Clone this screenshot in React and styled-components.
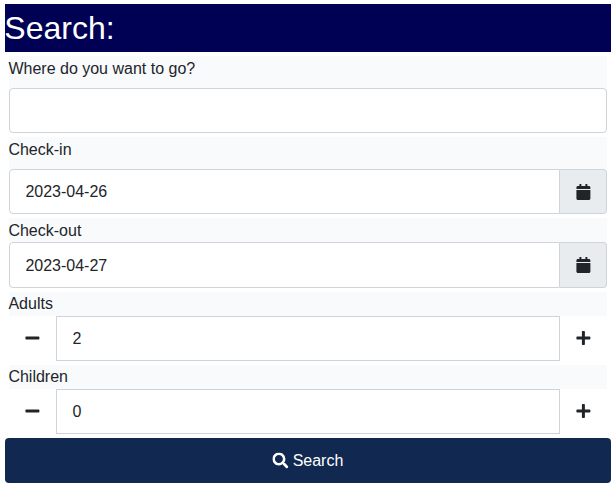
import React from 'react';
import styled, { createGlobalStyle } from 'styled-components';
import { FaCalendar, FaMinus, FaPlus, FaSearch } from 'react-icons/fa';

const GlobalStyle = createGlobalStyle`
  *, *::before, *::after { box-sizing: border-box; }
  body {
    margin: 0;
    background: #fff;
    color: #212529;
    font: 16px/24px "Liberation Sans", Arial, sans-serif;
  }
`;

const Form = styled.form`
  width: 606px;
  margin: 4px 0 0 5px;
`;

const Title = styled.h1`
  height: 48px;
  margin: 0 0 4px;
  background: #000055;
  color: #fff;
  font-size: 32px;
  font-weight: 400;
  line-height: 48px;
  text-indent: -0.7px;
`;

const Field = styled.div`
  display: flex;
  flex-direction: column;
  margin: 0 4px 4px;
  background: linear-gradient(#f9fafc, #f9fafc) top / 100% ${(p) => p.$labelHeight || 24}px no-repeat;
`;

const Label = styled.label`
  height: ${(p) => p.$height || 24}px;
  padding-top: ${(p) => p.$offset || 0}px;
  text-indent: -0.6px;
`;

const InputGroup = styled.div`
  display: flex;
  height: ${(p) => p.$height || 45}px;
`;

const Input = styled.input`
  flex: 1;
  min-width: 0;
  padding: ${(p) => p.$offset || 0}px 15.4px 0;
  border: 1px solid #ced4da;
  border-radius: ${(p) => p.$radius || '0'};
  background: #fff;
  color: #212529;
  font: inherit;
  outline: none;
`;

const Addon = styled.span`
  display: flex;
  align-items: center;
  justify-content: center;
  width: 47px;
  border: 1px solid #ced4da;
  border-left: 0;
  border-radius: 0 4px 4px 0;
  background: #e9ecef;

  svg { transform: translateX(0.4px); }
`;

const StepButton = styled.button`
  display: flex;
  align-items: center;
  justify-content: center;
  width: 47px;
  padding: 0 1px 1px 0;
  border: 0;
  background: #fff;
  color: #212529;
  font-size: 16px;

  svg { transform: translateX(0.4px); }
`;

const SubmitButton = styled.button`
  display: flex;
  align-items: center;
  justify-content: center;
  gap: 4px;
  width: 100%;
  height: 45px;
  padding: 0;
  border: 0;
  border-radius: 4px;
  background: #112851;
  color: #fff;
  font: inherit;

  svg { transform: translate(-0.6px, -0.6px); }
`;

function DateField({ id, label, value, labelHeight, height, inputOffset }) {
  return (
    <Field $labelHeight={labelHeight}>
      <Label htmlFor={id} $height={labelHeight} $offset={1}>{label}</Label>
      <InputGroup $height={height}>
        <Input id={id} defaultValue={value} $radius="4px 0 0 4px" $offset={inputOffset} />
        <Addon><FaCalendar /></Addon>
      </InputGroup>
    </Field>
  );
}

function CounterField({ id, label, initial }) {
  const [count, setCount] = React.useState(initial);
  return (
    <Field>
      <Label htmlFor={id}>{label}</Label>
      <InputGroup>
        <StepButton type="button" aria-label="Decrease" onClick={() => setCount(Math.max(0, count - 1))}>
          <FaMinus />
        </StepButton>
        <Input id={id} value={count} readOnly />
        <StepButton type="button" aria-label="Increase" onClick={() => setCount(count + 1)}>
          <FaPlus />
        </StepButton>
      </InputGroup>
    </Field>
  );
}

export default function App() {
  return (
    <>
      <GlobalStyle />
      <Form onSubmit={(e) => e.preventDefault()}>
        <Title>Search:</Title>
        <Field $labelHeight={32}>
          <Label htmlFor="destination" $height={32} $offset={1}>Where do you want to go?</Label>
          <InputGroup>
            <Input id="destination" $radius="4px" />
          </InputGroup>
        </Field>
        <DateField id="checkin" label="Check-in" value="2023-04-26" labelHeight={32} />
        <DateField id="checkout" label="Check-out" value="2023-04-27" height={46} inputOffset={2} />
        <CounterField id="adults" label="Adults" initial={2} />
        <CounterField id="children" label="Children" initial={0} />
        <SubmitButton type="submit">
          <FaSearch />
          Search
        </SubmitButton>
      </Form>
    </>
  );
}
